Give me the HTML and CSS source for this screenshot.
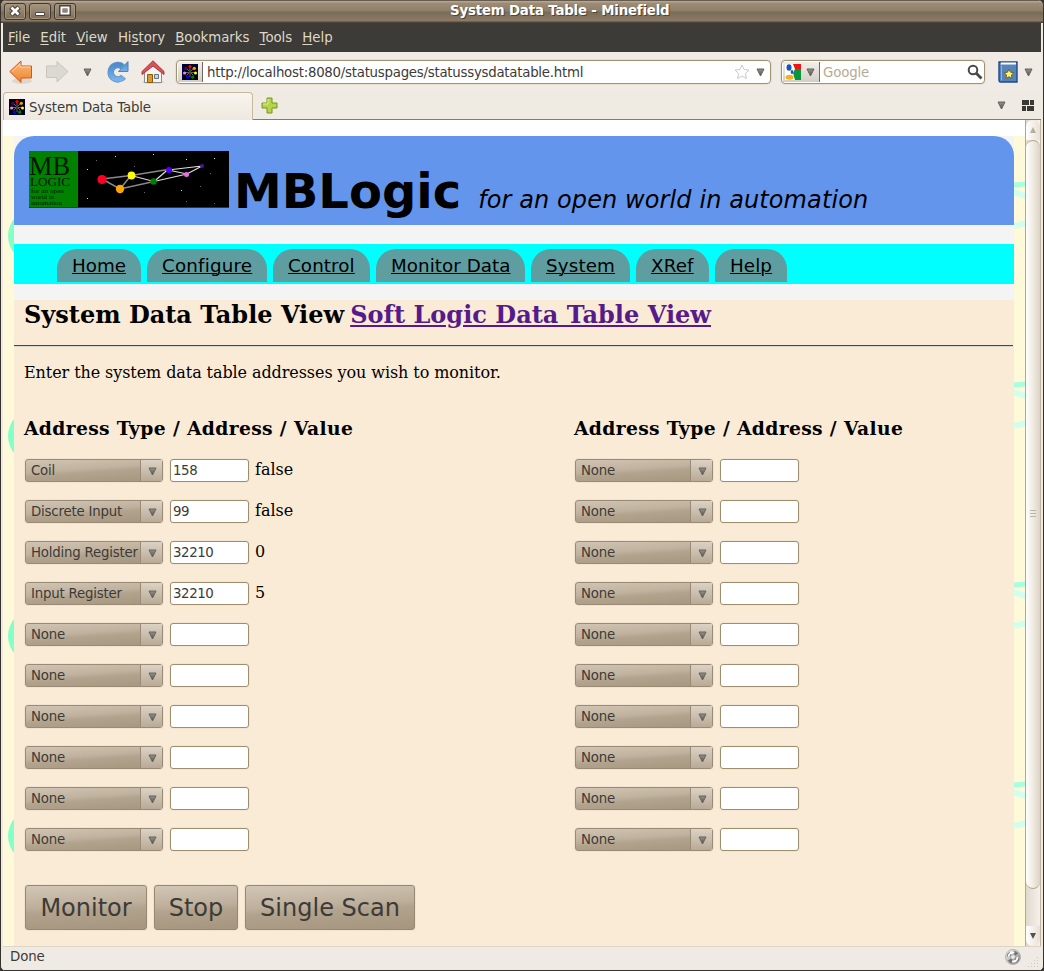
FILE: index.html
```html
<!DOCTYPE html>
<html lang="en">
<head>
<meta charset="utf-8">
<title>System Data Table - Minefield</title>
<link rel="stylesheet" href="styles.css">
</head>
<body>
<svg class="defs" width="0" height="0" aria-hidden="true">
  <defs>
    <linearGradient id="orange" x1="0" y1="0" x2="0" y2="1"><stop offset="0" stop-color="#fbbd80"/><stop offset="1" stop-color="#ef8129"/></linearGradient>
    <linearGradient id="blue" x1="0" y1="0" x2="0" y2="1"><stop offset="0" stop-color="#4d8dcc"/><stop offset="1" stop-color="#79b0e6"/></linearGradient>
    <linearGradient id="tri" x1="0" y1="0" x2="0" y2="1"><stop offset="0" stop-color="#96938d"/><stop offset="1" stop-color="#55524c"/></linearGradient>
    <linearGradient id="chrome" x1="0" y1="0" x2="1" y2="1"><stop offset="0" stop-color="#fff"/><stop offset="1" stop-color="#77797a"/></linearGradient>
    <symbol id="wheel" viewBox="0 0 16 16">
      <path fill="#000" d="M0 0h16v16H0z"/><path fill="none" stroke="#000040" d="M.5.5h15v15H.5z"/>
      <path stroke="#707070" stroke-width=".9" d="M8 3v10M3.500 8.500h9M4.500 4.500l7 7M11.500 4.500l-7 7"/>
      <circle cx="8" cy="8" r="1.200" fill="#444"/>
      <circle cx="8" cy="2.500" r="1.600" fill="red"/><circle cx="12.300" cy="4.300" r="1.600" fill="#ff9a00"/><circle cx="13.500" cy="9" r="1.500" fill="#ff0"/><circle cx="10.700" cy="13.200" r="1.600" fill="#008000"/><circle cx="5.600" cy="13.200" r="1.600" fill="#00f"/><circle cx="2.600" cy="9" r="1.600" fill="#ee82ee"/><circle cx="3.800" cy="4.400" r="1.600" fill="#4b0082"/>
    </symbol>
    <symbol id="down" viewBox="0 0 9 9"><path d="M1 1h7L4.500 8z" fill="url(#tri)" stroke="#65625c"/></symbol>
    <pattern id="blob" width="11" height="200" patternUnits="userSpaceOnUse"><circle cx="32" cy="100" r="27" fill="#83ffc8"/></pattern>
    <pattern id="stripes" width="11" height="200" patternUnits="userSpaceOnUse"><path d="M-1 56.200 12 59.800M-1 90 12 87.300" stroke="#d2ffec" stroke-width="6"/><path d="M-1 49.200 12 47.800" stroke="#a9ffdc" stroke-width="5"/></pattern>
  </defs>
</svg>
<div class="window">
  <header class="titlebar">
    <div class="wm">
      <span><svg width="22" height="16"><path d="M7 4l8 8M15 4l-8 8" stroke="#4c4338" stroke-width="5"/><path d="M7.500 4.500l7 7M14.500 4.500l-7 7" stroke="#fff" stroke-width="2.700"/></svg></span>
      <span><svg width="22" height="16"><path d="M6.500 9.500h9v3h-9z" fill="#fff" stroke="#514639"/></svg></span>
      <span><svg width="22" height="16"><path d="M7 4h8v7H7z" fill="none" stroke="#4c4338" stroke-width="4"/><path d="M7.500 4.500h7v6h-7z" fill="none" stroke="#fff" stroke-width="2"/></svg></span>
    </div>
    <div class="caption">System Data Table - Minefield</div>
  </header>
  <div class="frame">
    <nav class="menubar"><span><u>F</u>ile</span><span><u>E</u>dit</span><span><u>V</u>iew</span><span>Hi<u>s</u>tory</span><span><u>B</u>ookmarks</span><span><u>T</u>ools</span><span><u>H</u>elp</span></nav>
    <div class="toolbar">
      <svg class="back" width="24" height="24"><ellipse cx="13" cy="21" rx="10" ry="3" fill="#ddd7ce"/><path d="M.8 11.500 12 1v5h10.500v12H12v4.500z" fill="url(#orange)" stroke="#d9541f" stroke-linejoin="round"/><path d="M3 11.500 11 4v3h10.500" fill="none" stroke="#fdd3a5"/></svg>
      <svg class="fwd" width="24" height="24"><path d="M23 11.500 12 1.500V6H1.500v11.500H12V22z" fill="#dcd9d3" stroke="#c8c5be" stroke-linejoin="round"/></svg>
      <svg class="hist" width="9" height="9"><use href="#down"/></svg>
      <svg class="reload" width="24" height="24"><path d="M17.500 16.700a7.200 7.200 0 1 1-1-10" fill="none" stroke="#5b93cf" stroke-width="6.500"/><path d="M12.500 11.500h9.500V1.500z" fill="url(#blue)" stroke="#4a86c5"/><path d="M17.500 16.700a7.200 7.200 0 1 1-1-10" fill="none" stroke="url(#blue)" stroke-width="4.800"/></svg>
      <svg class="home" width="24" height="24"><ellipse cx="12" cy="22" rx="11" ry="2" fill="#dcd6cc"/><path d="M3.500 12 12 4l8.500 8v10.500h-17z" fill="#f3f3f1" stroke="#8c8c88"/><path d="M6.500 14.500h5v8h-5z" fill="#d69a2d" stroke="#8f5902"/><path d="M13.500 14.500h4v4h-4z" fill="#c4d3e2" stroke="#667482"/><path d="M12 .8 1 11.500v3L12 6l11 8.500v-3z" fill="#d65356" stroke="#b0383d" stroke-linejoin="round"/></svg>
      <div class="url">
        <span class="ident"><svg width="16" height="16"><use href="#wheel"/></svg></span>
        <span class="address">http://localhost:8080/statuspages/statussysdatatable.html</span>
        <svg class="star" width="16" height="16"><path d="M8 1l2.100 4.500 4.900.6-3.600 3.400 1 5L8 12l-4.400 2.500 1-5L1 6.100l4.900-.6z" fill="#fff" stroke="#c9c9c9" stroke-linejoin="round"/></svg>
        <svg width="9" height="9"><use href="#down"/></svg>
      </div>
      <div class="search">
        <span class="engine"><svg width="16" height="16"><path d="M8 0h8v5H7z" fill="#ee1515"/><path d="M7 5h9v11H7z" fill="#09963b"/><path d="M0 0h8l2 5-2 4 2 7H0z" fill="#fff"/><ellipse cx="4" cy="3.500" rx="2.500" ry="3.200" fill="#1556c0"/><ellipse cx="7" cy="8" rx="1.300" ry="2" fill="#1556c0"/><ellipse cx="4.500" cy="13.300" rx="4" ry="2.500" fill="#f4b020"/></svg><svg width="9" height="9"><use href="#down"/></svg></span>
        <span class="hint">Google</span>
        <svg width="16" height="16"><circle cx="6" cy="6" r="4.300" fill="none" stroke="#494845" stroke-width="2"/><path d="M9 9l5.500 5.500" stroke="#494845" stroke-width="2.800"/></svg>
      </div>
      <svg class="book" width="20" height="22"><path d="M1 1h18v20H2.500Q1 21 1 19z" fill="#5584bd" stroke="#204a87" stroke-width="1.400"/><path d="M3 1.500h15v2H2.500z" fill="#fff"/><path d="M3.500 4.500v15" stroke="#8eb3df"/><path d="M11 8l1.500 3.200 3.500.4-2.600 2.400.7 3.500-3.100-1.700-3.100 1.700.7-3.500L6 11.600l3.500-.4z" fill="#fff27a" stroke="#776312"/></svg>
      <svg class="bookdown" width="9" height="9"><use href="#down"/></svg>
    </div>
    <div class="tabstrip">
      <div class="tab"><svg width="16" height="16"><use href="#wheel"/></svg><span>System Data Table</span></div>
      <div class="rest">
        <svg class="plus" width="17" height="17"><path d="M6 1h5v5h5v5h-5v5H6v-5H1V6h5z" fill="#b7d349" stroke="#74951f"/><path d="M7 2v5H2" fill="none" stroke="#e1efa0"/></svg>
        <svg class="taball" width="9" height="9"><use href="#down"/></svg>
        <svg width="12" height="12"><path fill="#3a3936" d="M0 0h7v5H0zM8 0h4v5H8zM0 6h4v5H0zM5 6h7v5H5z"/></svg>
      </div>
    </div>
    <div class="viewport">
      <div class="canvas">
        <div class="topgap"></div>
        <div class="cols">
          <svg class="gutter" width="11" height="810"><path d="M0 0h11v810H0z" fill="url(#blob)"/></svg>
          <div class="page">
            <div class="banner">
              <svg class="logo" width="200" height="57">
                <path fill="#000" d="M0 0h200v57H0z"/><path fill="#008200" d="M0 0h49v56H0z"/><path fill="#4d00ff" d="M0 56h200v1H0z"/>
                <g class="logotext"><text x="0" y="23.500" font-size="27" textLength="41" lengthAdjust="spacingAndGlyphs">MB</text><text x="1" y="35" font-size="13.500" textLength="40" lengthAdjust="spacingAndGlyphs">LOGIC</text><text x="2" y="42" font-size="5.500" textLength="33" lengthAdjust="spacingAndGlyphs">for an open</text><text x="2" y="48.200" font-size="5.500" textLength="23" lengthAdjust="spacingAndGlyphs">world in</text><text x="2" y="54.400" font-size="5.500" textLength="31" lengthAdjust="spacingAndGlyphs">automation</text></g>
                <path d="M73 28l29-3.500 37-6M73 28l18 10 34-7.500M91 38l11-13.500" fill="none" stroke="#888" stroke-width="1.500"/>
                <path d="M102 24.500l23 6 33-7.500 15-8-34 4 19 4M125 30.500l14-12" fill="none" stroke="#ddd" stroke-width="1.200"/>
                <circle cx="73" cy="28.500" r="4.600" fill="#ff0023"/><circle cx="91" cy="38" r="4.200" fill="#ffa500"/><circle cx="102.500" cy="24.500" r="3.900" fill="#ff0"/><circle cx="124.500" cy="30.500" r="3.200" fill="#008000"/><circle cx="140" cy="19" r="3" fill="#50f"/><circle cx="157.500" cy="23.500" r="2.500" fill="#ee6bee"/><circle cx="173" cy="15" r="2" fill="#52119a"/>
                <path fill="#ddd" d="M86 5h1v1h-1zM124 3h1v1h-1zM157 8h1v1h-1zM185 7h1v1h-1zM58 18h1v1h-1zM58 47h1v1h-1zM152 39h1v1h-1z"/><path fill="#666" d="M67 9h1v1h-1zM105 15h1v1h-1zM181 22h1v1h-1zM171 35h1v1h-1zM115 41h1v1h-1zM157 50h1v1h-1zM185 52h1v1h-1z"/>
              </svg>
              <span class="brand">MBLogic</span><em>for an open world in automation</em>
            </div>
            <nav class="links"><a class="n1">Home</a><a class="n2">Configure</a><a class="n3">Control</a><a class="n4">Monitor Data</a><a class="n5">System</a><a class="n6">XRef</a><a class="n7">Help</a></nav>
            <main>
              <div class="heading"><h2>System Data Table View</h2><h2 class="other">Soft Logic Data Table View</h2></div>
              <hr>
              <p>Enter the system data table addresses you wish to monitor.</p>
              <div class="tables">
                <section><h3>Address Type / Address / Value</h3>
                  <div class="row"><div class="combo"><span>Coil</span><i><svg width="9" height="9"><use href="#down"/></svg></i></div><input value="158"><span>false</span></div>
                  <div class="row"><div class="combo"><span>Discrete Input</span><i><svg width="9" height="9"><use href="#down"/></svg></i></div><input value="99"><span>false</span></div>
                  <div class="row"><div class="combo"><span>Holding Register</span><i><svg width="9" height="9"><use href="#down"/></svg></i></div><input value="32210"><span>0</span></div>
                  <div class="row"><div class="combo"><span>Input Register</span><i><svg width="9" height="9"><use href="#down"/></svg></i></div><input value="32210"><span>5</span></div>
                  <div class="row"><div class="combo"><span>None</span><i><svg width="9" height="9"><use href="#down"/></svg></i></div><input></div>
                  <div class="row"><div class="combo"><span>None</span><i><svg width="9" height="9"><use href="#down"/></svg></i></div><input></div>
                  <div class="row"><div class="combo"><span>None</span><i><svg width="9" height="9"><use href="#down"/></svg></i></div><input></div>
                  <div class="row"><div class="combo"><span>None</span><i><svg width="9" height="9"><use href="#down"/></svg></i></div><input></div>
                  <div class="row"><div class="combo"><span>None</span><i><svg width="9" height="9"><use href="#down"/></svg></i></div><input></div>
                  <div class="row"><div class="combo"><span>None</span><i><svg width="9" height="9"><use href="#down"/></svg></i></div><input></div>
                </section>
                <section><h3>Address Type / Address / Value</h3>
                  <div class="row"><div class="combo"><span>None</span><i><svg width="9" height="9"><use href="#down"/></svg></i></div><input></div>
                  <div class="row"><div class="combo"><span>None</span><i><svg width="9" height="9"><use href="#down"/></svg></i></div><input></div>
                  <div class="row"><div class="combo"><span>None</span><i><svg width="9" height="9"><use href="#down"/></svg></i></div><input></div>
                  <div class="row"><div class="combo"><span>None</span><i><svg width="9" height="9"><use href="#down"/></svg></i></div><input></div>
                  <div class="row"><div class="combo"><span>None</span><i><svg width="9" height="9"><use href="#down"/></svg></i></div><input></div>
                  <div class="row"><div class="combo"><span>None</span><i><svg width="9" height="9"><use href="#down"/></svg></i></div><input></div>
                  <div class="row"><div class="combo"><span>None</span><i><svg width="9" height="9"><use href="#down"/></svg></i></div><input></div>
                  <div class="row"><div class="combo"><span>None</span><i><svg width="9" height="9"><use href="#down"/></svg></i></div><input></div>
                  <div class="row"><div class="combo"><span>None</span><i><svg width="9" height="9"><use href="#down"/></svg></i></div><input></div>
                  <div class="row"><div class="combo"><span>None</span><i><svg width="9" height="9"><use href="#down"/></svg></i></div><input></div>
                </section>
              </div>
              <div class="actions"><button class="b1">Monitor</button><button class="b2">Stop</button><button class="b3">Single Scan</button></div>
            </main>
          </div>
          <svg class="gutter" width="11" height="810"><path d="M0 0h11v810H0z" fill="url(#stripes)"/></svg>
        </div>
      </div>
      <div class="scroll">
        <div class="up"><svg width="6" height="6"><path d="M3 0l3 6H0z" fill="#b9ad9d"/></svg></div>
        <div class="thumb"><svg width="6" height="9"><path d="M0 .5h6M0 3.500h6M0 6.500h6" stroke="#bdb5a8"/></svg></div>
        <div class="dn"><svg width="6" height="6"><path d="M0 0h6L3 6z" fill="#55514a"/></svg></div>
      </div>
    </div>
    <footer class="status"><span>Done</span>
      <svg class="throbber" width="16" height="16"><circle cx="8" cy="8" r="7.500" fill="url(#chrome)" stroke="#b5b3af"/><circle cx="8" cy="8" r="4.500" fill="none" stroke="#6f7172" stroke-width="3.500" stroke-dasharray="4 3"/><circle cx="8" cy="8" r="4.500" fill="none" stroke="#fff" stroke-width="2" stroke-dasharray="8 6.100"/><circle cx="8" cy="8" r="2.300" fill="#efeae3" stroke="#999" stroke-width=".6"/></svg>
      <svg class="grip" width="12" height="12"><path stroke="#d3cabb" stroke-dasharray="1 2" d="M9 1.500h3M6 4.500h6M3 7.500h9M0 10.500h12"/></svg>
    </footer>
  </div>
</div>
</body>
</html>
```
FILE: styles.css
```css
* { box-sizing: border-box; }
body { margin: 0; background: #35322d; font: 13.33px/16px "DejaVu Sans", sans-serif; color: #3c3b37; }
svg { display: block; flex: none; }
.defs { position: absolute; }
.window { width: 1044px; height: 971px; display: flex; flex-direction: column; overflow: hidden; border-radius: 6px 6px 5px 5px; border-left: 1px solid #35322d; border-right: 1px solid #35322d; border-bottom: 1px solid #35322d; background: #efebe3; }
.titlebar { height: 23px; display: grid; grid-template-columns: 76px 966px; background: linear-gradient(#655b4e 0 1px, #b6a48c 1px 2px, #9d8d77 3px, #8d7e69 11px, #7a6b58 12px, #8b7b66 21px, #4c453b 22px); }
.wm { display: flex; gap: 3px; padding: 3px 0 0 3px; }
.wm span { width: 22px; height: 17px; border: 1px solid #40392f; border-radius: 3px; background: linear-gradient(#a59680, #7c6f5e); box-shadow: inset 0 0 0 1px #a6967e; overflow: hidden; }
.wm svg { margin: -1px 0 0 -1px; }
.caption { padding: 3px 0 0 373px; font-weight: bold; letter-spacing: -0.17px; color: #fff; text-shadow: 1px 1px #4e4437; white-space: nowrap; }
.frame { flex: 1; margin-left: 2px; margin-right: 2px; display: flex; flex-direction: column; min-height: 0; }
.menubar { height: 29px; flex: none; background: #3c3b37; color: #dfd8c8; display: flex; gap: 10.2px; padding: 7px 5px; letter-spacing: -0.04px; }
.menubar u { text-underline-offset: 2px; }
.toolbar { height: 40px; flex: none; display: flex; align-items: center; background: #f0ebe4; padding-left: 6px; }
.fwd { margin-left: 12px; }
.hist { margin-left: 14px; }
.reload { margin-left: 14px; }
.home { margin-left: 11px; }
.url, .search { height: 24px; border: 1px solid #a39272; border-radius: 4px; background: #fff; display: flex; align-items: center; box-shadow: 0 0 0 1px #e7dfd2; }
.url { width: 595px; margin-left: 11px; padding: 1px; }
.ident { height: 20px; width: 25px; background: linear-gradient(#f1eee9, #d3cec5); padding: 2px 4px; border-right: 1px solid #6d6a64; }
.address { width: 531px; padding: 2px 0 0 4px; letter-spacing: -0.25px; white-space: nowrap; }
.star { margin-right: 6px; }
.search { width: 204px; margin-left: 10px; padding: 1px; }
.engine { width: 37px; height: 20px; display: flex; align-items: center; gap: 5px; padding-left: 2px; background: linear-gradient(#f1eee9, #d3cec5); border-right: 1px solid #6d6a64; }
.hint { flex: 1; padding: 2px 0 0 3px; letter-spacing: -0.15px; color: #b8aa92; }
.book { margin-left: 13px; }
.bookdown { margin-left: 6px; }
.tabstrip { height: 28px; flex: none; display: flex; }
.tab { width: 250px; display: flex; gap: 4px; padding: 6px 5px 0; background: linear-gradient(#f8f5ef, #eee9df); border: 1px solid #c8b89e; border-bottom: 0; border-radius: 4px 4px 0 0; }
.tab span { padding-top: 1px; letter-spacing: -0.15px; white-space: nowrap; }
.rest { flex: 1; display: flex; align-items: center; border-bottom: 1px solid #8c7b64; padding: 0 7px 0 8px; }
.taball { margin-left: auto; margin-right: 16px; }
.viewport { height: 826px; flex: none; display: flex; }
.canvas { width: 1022px; display: flex; flex-direction: column; background: #fdf9d9; overflow: hidden; }
.topgap { height: 16px; background: #fff; }
.cols { display: flex; height: 810px; }
.page { width: 1000px; background: #f4f4f4; color: #000; }
.banner { height: 89px; display: flex; align-items: flex-start; padding: 15px; background: #6495ed; border-radius: 20px 20px 0 0; white-space: nowrap; }
.logotext { font-family: "Liberation Serif", serif; fill: #001500; }
.brand { font-size: 48px; line-height: 56px; font-weight: bold; padding: 12px 17px 0 5px; }
.banner em { font-size: 24px; line-height: 28px; padding-top: 35px; letter-spacing: 0.1px; }
.links { display: flex; gap: 6px; height: 40px; margin-top: 19px; padding: 5px 43px 2px; background: #0ff; }
.links a { padding: 5px 15px 0; font-size: 18.3px; line-height: 24px; background: #5f9ea0; border-radius: 20px 20px 0 0; text-decoration: underline; text-decoration-thickness: 1px; white-space: nowrap; }
.n1 { width: 84px; }
.n2 { width: 120px; letter-spacing: 0.18px; }
.n3 { width: 97px; letter-spacing: 0.1px; }
.n4 { width: 149px; letter-spacing: 0.05px; }
.n5 { width: 99px; letter-spacing: 0.15px; }
.n6 { width: 73px; letter-spacing: 0.15px; }
.n7 { width: 72px; letter-spacing: 0.1px; }
main { margin-top: 16px; height: 646px; background: #faebd7; font-family: "DejaVu Serif", serif; font-size: 16px; line-height: 19px; }
.heading { display: flex; gap: 6px; padding: 0 10px; height: 45px; }
h2 { margin: 0; font-size: 24px; line-height: 29px; white-space: nowrap; }
.other { color: #551a8b; text-decoration: underline; letter-spacing: 0.03px; }
hr { margin: 0 1px 0 0; border: 0; height: 2px; background: linear-gradient(#404a52 1px, #d5dbd2 1px); }
p { margin: 16px 10px 0; letter-spacing: -0.08px; }
.tables { display: flex; padding: 35px 10px 0; }
section { width: 550px; flex: none; }
section + section { width: 430px; }
h3 { margin: 0 0 20px; font-size: 18.72px; line-height: 22px; letter-spacing: 0.36px; }
.row { height: 41px; display: flex; align-items: flex-start; padding-left: 1px; }
.row > span { padding: 1px 0 0 6px; }
.combo { width: 138px; height: 23px; display: flex; font: 13.33px/21px "DejaVu Sans", sans-serif; letter-spacing: -0.2px; color: #3c3b37; border: 1px solid #9a8b77; border-radius: 3px; background: linear-gradient(176deg, #d0c4b3, #c0b29e 42%, #b2a38e 56%, #a6967f); box-shadow: 0 0 0 1px #f1e3d0; }
.combo > span { width: 114px; padding-left: 5px; white-space: nowrap; }
.combo i { flex: 1; padding: 7px 0 0 7px; border-left: 1px solid #998a75; background: linear-gradient(#dcd2c4, #b8aa96); }
input { width: 79px; height: 23px; margin-left: 7px; padding: 0 2px; border: 1px solid #9f8e6d; border-radius: 3px; background: #fff; font: 13.33px "DejaVu Sans", sans-serif; letter-spacing: -0.4px; color: #3c3b37; box-shadow: 0 0 0 1px #f3e5d1; }
.actions { display: flex; gap: 7px; padding: 16px 11px; }
button { height: 45px; padding: 0; border: 1px solid #978872; border-radius: 3px; background: linear-gradient(177deg, #d2c6b6, #bdaf9b 45%, #b2a38e 56%, #a5957e); font: 24px "DejaVu Sans", sans-serif; color: #3c3b37; box-shadow: 0 0 0 1px #f1e3d0; }
.b1 { width: 122px; }
.b2 { width: 84px; }
.b3 { width: 170px; }
.scroll { width: 16px; display: flex; flex-direction: column; border-left: 1px solid #b5a78f; border-right: 1px solid #c3b7a2; background: linear-gradient(90deg, #e0d9cd, #f5f1eb); }
.up, .dn { display: flex; justify-content: center; align-items: center; height: 20px; background: linear-gradient(90deg, #fff, #e7e0d5); }
.up { border-radius: 8px 8px 0 0; }
.dn { margin-top: auto; border-radius: 0 0 8px 8px; }
.thumb { height: 749px; display: flex; align-items: center; justify-content: center; border: 1px solid #b2a48a; border-width: 1px 0; border-radius: 7px; background: linear-gradient(90deg, #fff, #f0ebe2 50%, #dcd3c5); }
.status { flex: 1; display: flex; border-top: 1px solid #ded5c7; padding-left: 7px; background: #efeae3; }
.status span { padding-top: 2px; letter-spacing: -0.1px; }
.throbber { margin: 2px 0 0 auto; }
.grip { margin: 9px 1px 0 7px; }
```
